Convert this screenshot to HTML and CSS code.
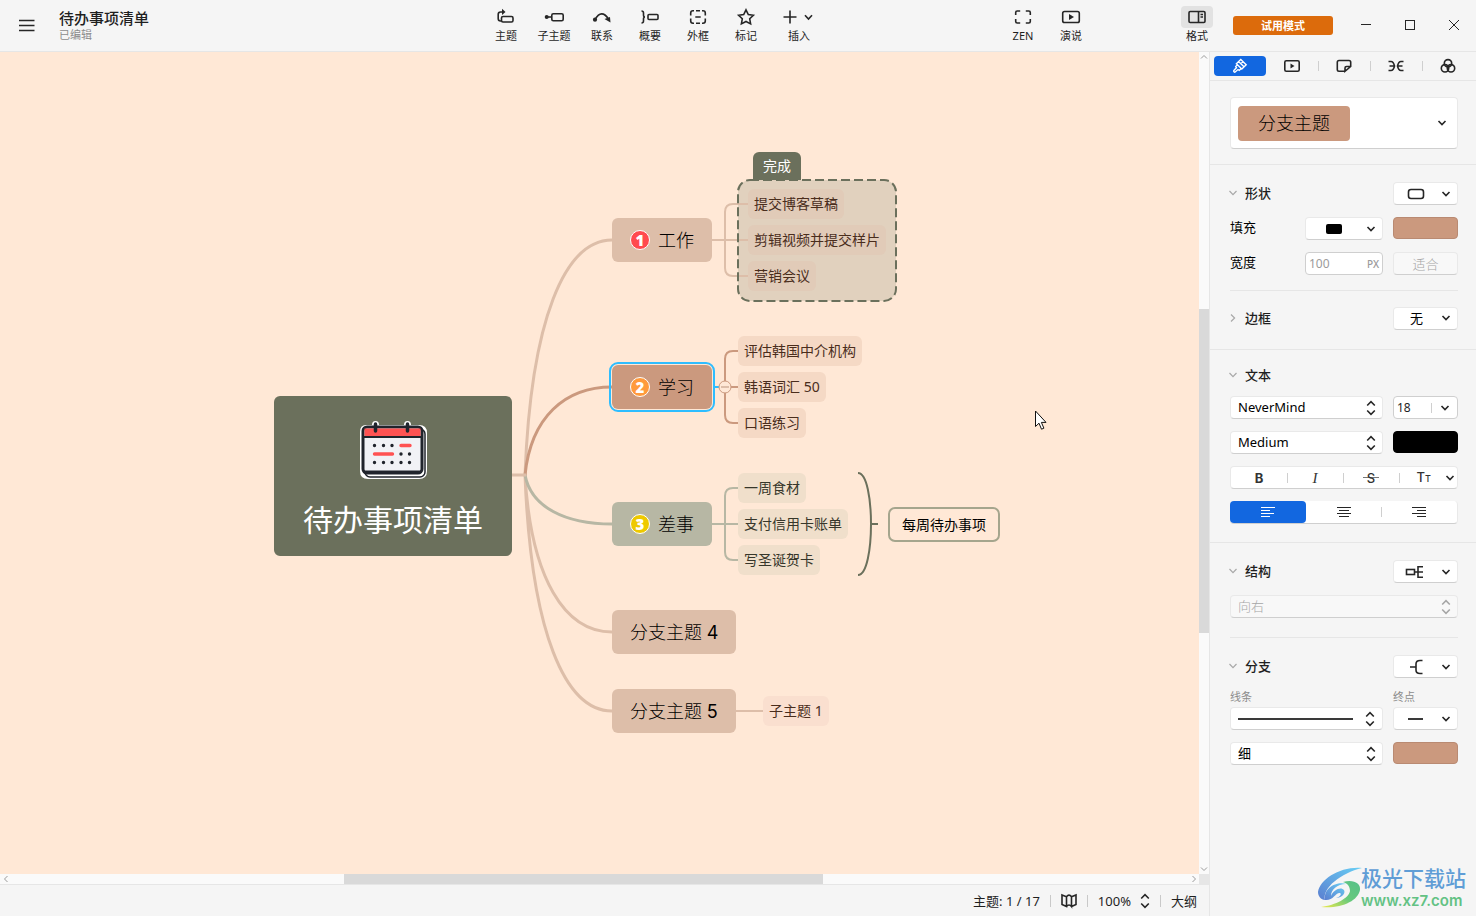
FILE: index.html
```html
<!DOCTYPE html>
<html lang="zh-CN">
<head>
<meta charset="utf-8">
<title>待办事项清单</title>
<link rel="stylesheet" href="styles.css">
</head>
<body>
<svg class="defs" aria-hidden="true">
  <symbol id="down" viewBox="0 0 10 10"><path d="M1.500 3l3.500 3.600L8.500 3"/></symbol>
  <symbol id="updown" viewBox="0 0 10 16"><path d="M1.200 5.500L5 1.700l3.800 3.800M1.200 10.500L5 14.300l3.800-3.800"/></symbol>
</svg>

<header class="topbar">
  <div class="brand">
    <button class="menu" aria-label="菜单"><svg class="ic" width="16" height="14" viewBox="0 0 16 14"><path d="M0 1.500h15.500M0 6.500h15.500M0 11.500h15.500"/></svg></button>
    <div class="doc"><h1 class="doc-title">待办事项清单</h1><span class="doc-state">已编辑</span></div>
  </div>
  <nav class="tools">
    <button class="tool"><svg class="ic" width="20" height="18" viewBox="0 0 20 18"><path d="M5 13H4.500Q2.200 13 2.200 10.500V6.500Q2.200 4 4.500 4H7"/><rect x="5.500" y="8.500" width="11.500" height="5.500" rx="1.500"/><path class="solid" d="M6 .8l3.500 3.100L6 7z"/></svg><span>主题</span></button>
    <button class="tool"><svg class="ic" width="20" height="18" viewBox="0 0 20 18"><path d="M2 9h6"/><rect x="7.800" y="5.800" width="11.400" height="7" rx="1.500"/><circle class="solid" cx="2.700" cy="9" r="2"/></svg><span>子主题</span></button>
    <button class="tool"><svg class="ic" width="20" height="18" viewBox="0 0 20 18"><path d="M3 11.500Q9.500 .5 16.500 11"/><circle class="solid" cx="3" cy="11.700" r="2.100"/><path class="solid" d="M12.500 11l5.500-2 .5 5.500z"/></svg><span>联系</span></button>
    <button class="tool"><svg class="ic" width="20" height="18" viewBox="0 0 20 18"><path d="M1.500 3q2 0 2 2v2q0 2 1.500 2Q3.500 9 3.500 11v2q0 2-2 2"/><rect x="8" y="6.500" width="10" height="5" rx="1"/></svg><span>概要</span></button>
    <button class="tool"><svg class="ic" width="20" height="18" viewBox="0 0 20 18"><path d="M2.700 7.500V5Q2.700 2.800 5 2.800h1M8 2.800h4M14 2.800h1q2.300 0 2.300 2.200v2.500M17.300 10.500V13q0 2.200-2.300 2.200h-1M12 15.200H8M6 15.200H5q-2.300 0-2.300-2.200v-2.500M7.300 9h5.400"/></svg><span>外框</span></button>
    <button class="tool"><svg class="ic" width="20" height="18" viewBox="0 0 20 18"><path d="M10 1.800l2.300 4.700 5.100.700-3.700 3.600.900 5.100L10 13.500l-4.600 2.400.900-5.100L2.600 7.200l5.100-.700z"/></svg><span>标记</span></button>
    <button class="tool tool-wide"><svg class="ic" width="34" height="18" viewBox="0 0 34 18"><path d="M8 2.500v13M1.500 9h13M23 7.200l3.500 3.800L30 7.200"/></svg><span>插入</span></button>
  </nav>
  <nav class="tools tools-view">
    <button class="tool"><svg class="ic" width="20" height="18" viewBox="0 0 20 18"><path d="M2.700 7V4.500q0-1.500 1.500-1.500h3M12.800 3h3q1.500 0 1.500 1.500V7M17.300 11v2.500q0 1.500-1.500 1.500h-3M7.200 15h-3q-1.500 0-1.500-1.500V11"/></svg><span>ZEN</span></button>
    <button class="tool"><svg class="ic" width="20" height="18" viewBox="0 0 20 18"><rect x="1.700" y="3.500" width="16.600" height="11" rx="1.800"/><path class="solid" d="M8 6l5 3-5 3z"/></svg><span>演说</span></button>
  </nav>
  <div class="actions">
    <button class="tool tool-on"><svg class="ic" width="20" height="18" viewBox="0 0 20 18"><rect x="2" y="3.500" width="16" height="11" rx="1.200"/><path d="M11.500 3.500v11M13.500 6.500h2.500M13.500 9h2.500"/></svg><span>格式</span></button>
    <button class="trial">试用模式</button>
    <div class="win">
      <button aria-label="最小化"><svg class="ic thin" width="12" height="12"><path d="M1 5.500h10"/></svg></button>
      <button aria-label="最大化"><svg class="ic thin" width="12" height="12"><rect x="1.500" y="1.500" width="9" height="9"/></svg></button>
      <button aria-label="关闭"><svg class="ic thin" width="12" height="12"><path d="M1 1l10 10M11 1L1 11"/></svg></button>
    </div>
  </div>
</header>

<div class="work">
  <main class="stage">
    <div class="canvas">
      <div class="boundary"></div>
      <svg class="links" width="1100" height="700" aria-hidden="true">
        <g class="main-line">
          <path class="tan" d="M525 423C531 267 565 188 612 188M525 423C531 527 565 580 612 580M525 423C531 580 565 659 612 659"/>
          <path class="sage" d="M525 423C531 455 565 472 612 472"/>
          <path class="clay" d="M525 423C531 365 565 335 612 335"/>
          <path class="tan" d="M512 423h14"/>
        </g>
        <g class="sub-line">
          <path class="tan" d="M712 188h36M748 152h-15q-8 0-8 8v56q0 8 8 8h15M730 659h34"/>
          <path class="clay" d="M718 335h20M738 299h-5q-8 0-8 8v56q0 8 8 8h5"/>
          <path class="sage" d="M712 472h26M738 436h-5q-8 0-8 8v56q0 8 8 8h5"/>
          <path class="olive" d="M858 421C867 421 871 448 871 472C871 496 867 523 858 523M871 472h7"/>
          <path class="blue" d="M715 335h5"/>
          <circle class="fold" cx="725" cy="335" r="6"/><path class="fold-bar" d="M721 335h8"/>
        </g>
        <rect class="dash" x="738" y="128" width="158" height="121" rx="12"/>
      </svg>
      <div class="boundary-label">完成</div>

      <div class="node root">
        <svg width="70" height="60" viewBox="0 0 70 60" aria-hidden="true">
          <path d="M8 4h6q0-4 3.500-4T21 4h25q0-4 3.500-4T53 4h8q8 0 8 8v38q0 8-8 8H10q-8 0-8-8V11q0-7 6-7z" fill="#fff"/>
          <rect x="7" y="8" width="60" height="48" rx="5" fill="#fff" stroke="#20242c" stroke-width="1.500"/>
          <rect x="5" y="6" width="59" height="46" rx="4" fill="#f1f2f6" stroke="#20242c" stroke-width="3"/>
          <path d="M6.500 7.500h56v8h-56z" fill="#ff5252"/>
          <path d="M5 16h59M6 50.500h57" stroke="#20242c" stroke-width="2"/>
          <path d="M17.500 3v7M49.500 3v7" stroke="#20242c" stroke-width="3.500" stroke-linecap="round"/>
          <g stroke="#20242c" stroke-width="3.400" stroke-linecap="round"><path d="M16.500 24.500h.01M25.500 24.500h.01M34 24.500h.01M43 33h.01M51.500 33h.01M16.500 41.500h.01M25.500 41.500h.01M34 41.500h.01M43 41.500h.01M51.500 41.500h.01"/></g>
          <path d="M43 24.500h9M16.500 33h18" stroke="#ff5252" stroke-width="3.400" stroke-linecap="round"/>
        </svg>
        <span>待办事项清单</span>
      </div>

      <div class="node branch tan-fill work-node"><b class="mark red">1</b>工作</div>
      <div class="node branch clay-fill selected study-node"><b class="mark orange">2</b>学习</div>
      <div class="node branch sage-fill chore-node"><b class="mark yellow">3</b>差事</div>
      <div class="node branch tan-fill four-node"><span>分支主题 <span class="num">4</span></span></div>
      <div class="node branch tan-fill five-node"><span>分支主题 <span class="num">5</span></span></div>

      <ul class="kids work-kids"><li>提交博客草稿</li><li>剪辑视频并提交样片</li><li>营销会议</li></ul>
      <ul class="kids study-kids"><li>评估韩国中介机构</li><li>韩语词汇 50</li><li>口语练习</li></ul>
      <ul class="kids chore-kids"><li>一周食材</li><li>支付信用卡账单</li><li>写圣诞贺卡</li></ul>
      <ul class="kids five-kids"><li>子主题 1</li></ul>
      <div class="node summary">每周待办事项</div>

      <svg class="cursor" width="14" height="22" viewBox="0 0 14 22" aria-hidden="true"><path d="M1.500 1v15.500l3.500-3.300 2.500 6 2.400-1-2.500-5.800h4.600z" fill="#fff" stroke="#111"/></svg>
    </div>
    <div class="bar bar-v"><svg class="ic arrow" width="10" height="10"><path d="M2 6.500L5 3.500l3 3"/></svg><i class="thumb"></i><svg class="ic arrow" width="10" height="10"><path d="M2 3.500l3 3 3-3"/></svg></div>
    <div class="bar bar-h"><svg class="ic arrow" width="10" height="10"><path d="M7.500 2l-3 3 3 3"/></svg><i class="thumb"></i><svg class="ic arrow" width="10" height="10"><path d="M3.500 2l3 3-3 3"/></svg></div>
    <div class="corner"></div>
    <footer class="status">
      <span>主题: 1 / 17</span><i class="sep"></i>
      <button aria-label="导航图"><svg class="ic" width="16" height="16" viewBox="0 0 16 16"><path d="M1 2l4.500 1.800V13.500L1 11.500zM5.500 3.800Q8 .5 10.500 3.800V13.500Q8 10.500 5.500 13.500M10.500 3.800L15 2v9.500l-4.500 2"/></svg></button><i class="sep"></i>
      <button class="zoom">100%<svg class="ic" width="10" height="16"><use href="#updown"/></svg></button><i class="sep"></i>
      <button>大纲</button>
    </footer>
  </main>

  <aside class="panel">
    <nav class="tabs">
      <button class="tab tab-on" aria-label="样式"><svg class="ic" width="16" height="16" viewBox="0 0 16 16"><path d="M8.800 1.500l5.400 5.200-4.400 4.300-5.400-5.200zM6.800 3.700l5.200 5.100M5.300 7L3.700 8.600l.8 1-2.700 2.900q-.4 1.500 1 1.700l3.200-2.700 1.200.8L9 10.700M11 3.500L9.500 5"/></svg></button>
      <button class="tab" aria-label="演说"><svg class="ic" width="16" height="16" viewBox="0 0 16 16"><rect x=".8" y="2.800" width="14.400" height="10.400" rx="1.500"/><path class="solid" d="M6.500 5.500l4 2.500-4 2.500z"/></svg></button>
      <button class="tab tab-sep" aria-label="贴纸"><svg class="ic" width="16" height="16" viewBox="0 0 16 16"><path d="M9 13.300H3q-1.700 0-1.700-1.700V4.200q0-1.700 1.700-1.700h10q1.700 0 1.700 1.700V8.500L9 13.300V10q0-1.500 1.500-1.500h4"/></svg></button>
      <button class="tab tab-sep" aria-label="骨架"><svg class="ic" width="16" height="16" viewBox="0 0 16 16"><path d="M.5 3.500H3q2.500 0 3.500 4.500-1 4.500-3.500 4.500H.5M1.500 8h5M9.500 8h5M15.500 3.500H13q-2.500 0-3.500 4.500 1 4.500 3.500 4.500h2.500"/></svg></button>
      <button class="tab tab-sep" aria-label="配色"><svg class="ic" width="16" height="16" viewBox="0 0 16 16"><circle cx="8" cy="5.300" r="3.700"/><circle cx="5" cy="10.300" r="3.700"/><circle cx="11" cy="10.300" r="3.700"/></svg></button>
    </nav>

    <section class="sec sec-style">
      <button class="box style-pick"><span class="sample">分支主题</span><svg class="ic" width="10" height="10"><use href="#down"/></svg></button>
    </section>

    <section class="sec">
      <div class="row"><h2 class="head"><svg class="ic" width="10" height="10"><use href="#down"/></svg>形状</h2>
        <button class="box side drop" aria-label="形状"><svg class="ic" width="18" height="12"><rect x="1.500" y="1.500" width="15" height="9" rx="2.500"/></svg><svg class="ic" width="10" height="10"><use href="#down"/></svg></button></div>
      <div class="row"><span class="name">填充</span>
        <button class="box mid drop" aria-label="填充样式"><svg width="18" height="12"><rect x="1" y="1" width="16" height="10" rx="2"/></svg><svg class="ic" width="10" height="10"><use href="#down"/></svg></button>
        <button class="swatch side" aria-label="填充颜色"></button></div>
      <div class="row"><label class="name" for="w">宽度</label>
        <div class="box field mid"><input id="w" value="100" disabled><span class="unit">PX</span></div>
        <button class="box side fit" disabled>适合</button></div>
      <hr class="rule">
      <div class="row"><h2 class="head"><svg class="ic fold-right" width="10" height="10"><use href="#down"/></svg>边框</h2>
        <div class="pick side"><select class="box none" aria-label="边框"><option>无</option></select><svg class="ic" width="10" height="10"><use href="#down"/></svg></div></div>
    </section>

    <section class="sec sec-text">
      <div class="row row-head"><h2 class="head"><svg class="ic" width="10" height="10"><use href="#down"/></svg>文本</h2></div>
      <div class="row"><div class="pick wide"><select class="box" aria-label="字体"><option>NeverMind</option></select><svg class="ic" width="10" height="16"><use href="#updown"/></svg></div>
        <div class="box field side"><input value="18" aria-label="字号"><button class="size-more" aria-label="选择字号"><svg class="ic" width="10" height="10"><use href="#down"/></svg></button></div></div>
      <div class="row"><div class="pick wide"><select class="box" aria-label="字重"><option>Medium</option></select><svg class="ic" width="10" height="16"><use href="#updown"/></svg></div>
        <button class="swatch black side" aria-label="文字颜色"></button></div>
      <div class="box group">
        <button class="seg bold">B</button><button class="seg italic">I</button><button class="seg strike"><span>S</span></button>
        <button class="seg case"><span>T<small>T</small></span><svg class="ic" width="10" height="10"><use href="#down"/></svg></button>
      </div>
      <div class="box group group-align">
        <button class="seg seg-on" aria-label="左对齐"><svg class="ic thin" width="16" height="12"><path d="M1 1.500h14M1 4.500h9M1 7.500h13M1 10.500h9"/></svg></button>
        <button class="seg" aria-label="居中"><svg class="ic thin" width="16" height="12"><path d="M1 1.500h14M3 4.500h10M1 7.500h14M3 10.500h10"/></svg></button>
        <button class="seg" aria-label="右对齐"><svg class="ic thin" width="16" height="12"><path d="M1 1.500h14M6 4.500h9M1 7.500h14M6 10.500h9"/></svg></button>
      </div>
    </section>

    <section class="sec sec-last">
      <div class="row"><h2 class="head"><svg class="ic" width="10" height="10"><use href="#down"/></svg>结构</h2>
        <button class="box side drop drop-wide" aria-label="结构"><svg class="ic" width="20" height="14"><rect x="1.500" y="4.500" width="8" height="5"/><path d="M9.500 7H18M18 1.700h-5v10.600h5"/></svg><svg class="ic" width="10" height="10"><use href="#down"/></svg></button></div>
      <div class="pick pick-full"><select class="box" aria-label="方向" disabled><option>向右</option></select><svg class="ic" width="10" height="16"><use href="#updown"/></svg></div>
      <hr class="rule rule-low">
      <div class="row"><h2 class="head"><svg class="ic" width="10" height="10"><use href="#down"/></svg>分支</h2>
        <button class="box side drop" aria-label="分支"><svg class="ic" width="18" height="16"><path d="M3 8h6M15.500 1.500H13q-4 0-4 3.500v6q0 3.500 4 3.500h2.500"/></svg><svg class="ic" width="10" height="10"><use href="#down"/></svg></button></div>
      <div class="row">
        <div class="stack wide"><span class="tiny">线条</span><button class="box line" aria-label="线条"><i class="stroke"></i><svg class="ic" width="10" height="16"><use href="#updown"/></svg></button></div>
        <div class="stack side"><span class="tiny">终点</span><button class="box drop" aria-label="终点"><i class="dashlet"></i><svg class="ic" width="10" height="10"><use href="#down"/></svg></button></div></div>
      <div class="row"><div class="pick wide"><select class="box" aria-label="粗细"><option>细</option></select><svg class="ic" width="10" height="16"><use href="#updown"/></svg></div>
        <button class="swatch side" aria-label="线条颜色"></button></div>
    </section>

    <div class="mark-site">
      <svg width="64" height="44" viewBox="0 0 64 44" aria-hidden="true">
        <defs>
          <linearGradient id="ga" x1="0" y1="1" x2="1" y2="0"><stop offset="0" stop-color="#5b7fd0"/><stop offset="1" stop-color="#68cff5"/></linearGradient>
          <linearGradient id="gb" x1="0" y1="1" x2="1" y2="0"><stop offset="0" stop-color="#f0ea4a"/><stop offset=".5" stop-color="#67c97c"/><stop offset="1" stop-color="#56c08a"/></linearGradient>
        </defs>
        <path d="M45 2C24 0 3 13 1 26c0 4 3 8 7 8C5 22 24 7 45 2z" fill="url(#ga)"/>
        <path d="M8 34c-2-12 12-19 21-16-9 0-15 6-15 12 2-6 10-10 13-6 2 4-3 8-8 8 4-1 6-4 4-5-4-1-7 8-15 7z" fill="url(#ga)"/>
        <path d="M26 16c10-3 18 1 17 8-2 11-19 19-39 17 15-2 28-9 29-16 0-5-3-8-7-9z" fill="url(#gb)"/>
      </svg>
      <div class="mark-text"><span class="mark-cn">极光下载站</span><span class="mark-url">www.xz7.com</span></div>
    </div>
  </aside>
</div>
</body>
</html>
```
FILE: styles.css
```css
* { box-sizing: border-box; }
body {
  margin: 0;
  height: 100vh;
  display: flex;
  flex-direction: column;
  overflow: hidden;
  background: #f5f5f5;
  color: #1f1f1f;
  font: 13px/20px "Noto Sans", "Noto Sans CJK SC", sans-serif;
}
button, input, select { font: inherit; color: inherit; }
button { border: 0; padding: 0; background: none; }
h1, h2, ul { margin: 0; padding: 0; font: inherit; }
ul { list-style: none; }
svg { display: block; flex: none; }
.defs { position: absolute; width: 0; height: 0; }
.ic { fill: none; stroke: #262626; stroke-width: 1.6; }
.ic .solid { fill: #262626; stroke: none; }
.thin { stroke-width: 1; }

/* top bar */
.topbar {
  display: grid;
  grid-template-columns: 482fr auto 171fr auto 78fr auto;
  flex: none;
  height: 52px;
  border-bottom: 1px solid #e6e6e6;
}
.brand { display: flex; gap: 24px; padding-left: 19px; }
.menu { align-self: center; }
.doc { display: flex; flex-direction: column; padding-top: 8px; }
.doc-title { font-size: 15px; line-height: 20px; font-weight: 500; }
.doc-state { font-size: 11px; line-height: 14px; color: #8c8c8c; }
.tools { display: flex; }
.tools-view { grid-column: 4; }
.actions { grid-column: 6; display: flex; }
.tool {
  display: flex;
  flex-direction: column;
  align-items: center;
  width: 48px;
  padding-top: 6px;
  font-size: 11px;
  line-height: 16px;
}
.tool svg { box-sizing: content-box; padding: 2px 6px; border-radius: 4px; }
.tool-wide { width: 58px; }
.tool-on svg { background: #e2e2e2; }
.trial {
  width: 100px;
  height: 19px;
  margin: 16px 11px 0 12px;
  border-radius: 3px;
  background: #dc6b0c;
  color: #fff;
  font-size: 11px;
  line-height: 18px;
  font-weight: 700;
}
.win { display: flex; padding-bottom: 2px; }
.win button { display: grid; place-items: center; width: 44px; }

/* work area */
.work { flex: 1; min-height: 0; display: grid; grid-template-columns: 1fr 267px; }
.stage {
  display: grid;
  grid-template: "canvas v" 1fr "h corner" 10px "status status" 32px / 1fr 10px;
  min-width: 0;
  min-height: 0;
}
.canvas { grid-area: canvas; position: relative; overflow: hidden; background: #ffe8d6; color: #000; }
.bar { display: flex; justify-content: space-between; position: relative; background: #fafafa; }
.bar-v { grid-area: v; flex-direction: column; }
.bar-h { grid-area: h; }
.thumb { position: absolute; background: #d9d9d9; }
.bar-v .thumb { left: 0; right: 0; top: 31.300%; height: 39.400%; }
.bar-h .thumb { top: 0; bottom: 0; left: 28.700%; width: 39.900%; }
.arrow { stroke: #9b9b9b; stroke-width: 1; }
.corner { grid-area: corner; background: #e6e6e6; }
.status {
  grid-area: status;
  display: flex;
  align-items: center;
  justify-content: flex-end;
  gap: 10px;
  padding-right: 12px;
  border-top: 1px solid #e6e6e6;
}
.sep { width: 1px; height: 12px; background: #c9c9c9; }
.zoom { display: flex; align-items: center; gap: 9px; }

/* mind map */
.links { position: absolute; left: 0; top: 0; fill: none; }
.main-line { stroke-width: 3; }
.sub-line { stroke-width: 2; }
.tan { stroke: #ddbea9; }
.clay { stroke: #cb997e; }
.sage { stroke: #b7b7a4; }
.olive { stroke: #6b705c; }
.blue { stroke: #2ebdff; }
.fold { fill: #ffe8d6; stroke: #cb997e; stroke-width: 1; }
.fold-bar { stroke: #ddbea9; stroke-width: 2; }
.dash { stroke: #6b705c; stroke-width: 2; stroke-dasharray: 9 4; }
.boundary { position: absolute; left: 738px; top: 128px; width: 158px; height: 121px; border-radius: 12px; background: #e1d1be; }
.boundary-label {
  position: absolute;
  left: 753px;
  top: 100px;
  padding: 4px 10px;
  border-radius: 6px 6px 0 0;
  background: #6b705c;
  color: #fff;
  font-size: 14px;
}
.node { position: absolute; display: flex; align-items: center; white-space: nowrap; }
.root {
  left: 274px;
  top: 344px;
  width: 238px;
  height: 160px;
  flex-direction: column;
  padding-top: 25px;
  gap: 17px;
  border-radius: 6px;
  background: #6b705c;
  color: #fff;
  font-size: 30px;
  line-height: 44px;
}
.branch { left: 612px; height: 44px; padding: 0 18px; gap: 8px; border-radius: 6px; font-size: 18px; line-height: 26px; font-weight: 300; }
.num { font-family: "Inter", sans-serif; font-weight: 400; }
.tan-fill { background: #ddbea9; }
.clay-fill { background: #cb997e; }
.sage-fill { background: #b7b7a4; }
.selected { outline: 2px solid #2ebdff; outline-offset: 1px; }
.work-node { top: 166px; }
.study-node { top: 313px; }
.chore-node { top: 450px; }
.four-node { top: 558px; }
.five-node { top: 637px; }
.mark {
  width: 20px;
  height: 20px;
  border: 1px solid #fff;
  border-radius: 50%;
  color: #fff;
  font: 800 15px/18px "Open Sans", sans-serif;
  text-align: center;
}
.red { background: #ff4a4f; }
.orange { background: #ff9a3c; }
.yellow { background: #eec900; }
.kids { position: absolute; display: flex; flex-direction: column; align-items: flex-start; gap: 6px; left: 738px; }
.kids li { height: 30px; padding: 5px 6px; border-radius: 6px; font-size: 14px; white-space: nowrap; }
.work-kids { left: 748px; top: 137px; color: #4a2d1c; }
.work-kids li { background: #e1cbb8; }
.study-kids { top: 284px; color: #4a2d1c; }
.study-kids li { background: #f5d9c5; }
.chore-kids { top: 421px; color: #37372b; }
.chore-kids li { background: #f0dfcb; }
.five-kids { left: 763px; top: 644px; color: #4a2d1c; }
.five-kids li { background: #fadfcf; }
.summary { left: 888px; top: 455px; height: 35px; padding: 0 12px; border: 2px solid #a5a58d; border-radius: 7px; font-size: 14px; }
.cursor { position: absolute; left: 1034px; top: 358px; }

/* format panel */
.panel { position: relative; border-left: 1px solid #e6e6e6; }
.tabs { display: flex; padding: 4px 2px 4px 4px; border-bottom: 1px solid #e6e6e6; }
.tab { position: relative; display: grid; place-items: center; flex: 1; height: 20px; border-radius: 4px; }
.tab-on { background: #1267e0; }
.tab-on .ic { stroke: #fff; stroke-width: 1.4; }
.tab-sep::before { content: ""; position: absolute; left: 0; top: 5px; width: 1px; height: 10px; background: #cfcfcf; }
.sec { display: flex; flex-direction: column; gap: 13px; padding: 17px 18px 20px 20px; border-bottom: 1px solid #e6e6e6; }
.sec-style { padding: 16px 18px 15px 20px; }
.sec-text { padding-top: 14px; padding-bottom: 19px; }
.sec-last { border-bottom: 0; }
.row { display: flex; gap: 10px; min-height: 22px; align-items: center; }
.row-head { margin-bottom: -3px; }
.box {
  display: flex;
  align-items: center;
  height: 23px;
  border: 1px solid #e9e9e9;
  border-bottom-color: #cfcfcf;
  border-radius: 4px;
  background: #fff;
}
.row .box, .pick .box { margin-bottom: -1px; }
.box:disabled { background: #f8f8f8; color: #a6a6a6; opacity: 1; }
.style-pick { height: 52px; padding: 0 10px 0 7px; justify-content: space-between; }
.sample { padding: 4px 20px 5px; border-radius: 4px; background: #cb997e; color: #000; font-size: 18px; line-height: 26px; font-weight: 300; }
.head { display: flex; flex: 1; align-items: center; gap: 7px; margin-left: -2px; padding-bottom: 1px; line-height: 18px; font-weight: 500; }
.head .ic { stroke: #a8a8a8; stroke-width: 1.2; }
.fold-right { transform: rotate(-90deg); }
.name { flex: 1; padding-bottom: 2px; color: #000; }
.side { width: 65px; flex: none; }
.mid { width: 78px; flex: none; }
.wide { flex: 1; min-width: 0; }
.drop { justify-content: space-between; padding: 0 6px 0 13px; }
.drop-wide { padding-left: 11px; }
.mid.drop { padding-left: 19px; }
.swatch { height: 22px; border: 1px solid #b98a72; border-radius: 4px; background: #cb997e; }
.black { border-color: #000; background: #000; }
.field { border-color: #cfcfcf; padding: 0 3px; }
.field input { width: 100%; min-width: 0; border: 0; padding: 0; background: none; font-size: 12px; line-height: 20px; outline: 0; }
.field input:disabled { color: #9b9b9b; }
.unit { color: #9b9b9b; font-size: 10px; font-weight: 500; }
.size-more { padding: 0 4px 0 8px; border-left: 1px solid #cfcfcf; }
.fit { justify-content: center; font-weight: 300; }
.rule { width: 100%; margin: 3px 0; border: 0; border-top: 1px solid #e6e6e6; }
.rule-low { margin: 7px 0 4px; }
.pick { position: relative; }
.pick select { width: 100%; padding: 0 7px 2px; appearance: none; line-height: 18px; color: #000; }
.pick select:disabled { color: #a6a6a6; font-weight: 300; }
.pick .none { padding: 0 16px 2px; }
.pick .ic { position: absolute; right: 7px; top: 4px; pointer-events: none; }
.pick.side .ic { top: 6px; }
.pick select:disabled + .ic { stroke: #a6a6a6; }
.group { margin-bottom: -1px; }
.seg { position: relative; display: flex; flex: 1; align-items: center; justify-content: center; height: 22px; color: #333; }
.seg + .seg::before { content: ""; position: absolute; left: 0; top: 6px; width: 1px; height: 10px; background: #cfcfcf; }
.seg-on + .seg::before { display: none; }
.group-align { border-left: 0; border-top: 0; }
.seg-on { height: 22px; border-radius: 4px; background: #1267e0; }
.seg-on .ic { stroke: #fff; }
.bold { font: 700 13px/20px "Inter", sans-serif; }
.italic { font: italic 15px/20px "Liberation Serif", serif; }
.strike { font: 500 13px/20px "Inter", sans-serif; }
.strike span { padding: 0 4px; background: linear-gradient(#777, #777) center / 100% 1px no-repeat; }
.case { justify-content: flex-end; gap: 14px; padding-right: 2px; font: 500 13px/20px "Inter", sans-serif; }
.case small { font-size: 9px; }
.stack { display: flex; flex-direction: column; gap: 2px; }
.tiny { margin-top: -1px; color: #8c8c8c; font-size: 11px; line-height: 16px; }
.line { gap: 12px; padding: 0 7px; }
.stroke { flex: 1; height: 2px; background: #3a3a3a; }
.dashlet { width: 15px; height: 2px; margin-left: 1px; background: #3a3a3a; }

/* site mark */
.mark-site { position: absolute; right: 10px; bottom: 5px; display: flex; align-items: center; pointer-events: none; }
.mark-site svg { margin-right: -20px; }
.mark-text { display: flex; flex-direction: column; }
.mark-cn { color: #5f9dd6; font-size: 21px; line-height: 26px; font-weight: 500; }
.mark-url { color: #63c284; font: 600 15px/20px "Inter", sans-serif; }
```
